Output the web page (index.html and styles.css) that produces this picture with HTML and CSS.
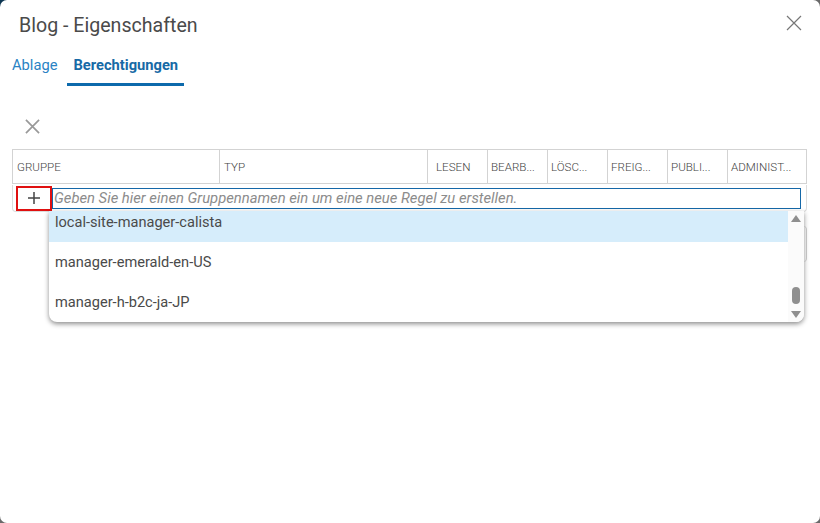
FILE: index.html
```html
<!DOCTYPE html>
<html lang="de">
<head>
    <meta charset="UTF-8">
    <title>Blog - Eigenschaften</title>
    <link rel="stylesheet" href="styles.css">
</head>
<body>
    <div class="dialog">
        <!-- Title bar -->
        <div class="dialog-head">
            <h1 class="dialog-title">Blog - Eigenschaften</h1>
            <button class="close-btn" title="Schließen">
                <svg width="16" height="16" viewBox="0 0 16 16"><path d="M1 1 L15 15 M15 1 L1 15" stroke="#777" stroke-width="1.2" fill="none"/></svg>
            </button>
        </div>

        <!-- Tabs -->
        <div class="tabs">
            <a class="tab">Ablage</a>
            <a class="tab active">Berechtigungen</a>
        </div>

        <!-- Toolbar -->
        <div class="toolbar">
            <button class="tool-btn" title="Entfernen">
                <svg width="16" height="16" viewBox="0 0 16 16"><path d="M1 1 L15 15 M15 1 L1 15" stroke="#999" stroke-width="1.8" fill="none"/></svg>
            </button>
        </div>

        <!-- Permissions table -->
        <div class="grid">
            <div class="grid-head">
                <div class="col col-group">GRUPPE</div>
                <div class="col col-type">TYP</div>
                <div class="col col-perm col-read">LESEN</div>
                <div class="col col-perm">BEARB...</div>
                <div class="col col-perm">LÖSC...</div>
                <div class="col col-perm">FREIG...</div>
                <div class="col col-perm">PUBLI...</div>
                <div class="col col-admin">ADMINIST...</div>
            </div>
            <div class="add-row">
                <button class="add-btn">
                    <svg width="14" height="14" viewBox="0 0 14 14"><path d="M7 1 V13 M1 7 H13" stroke="#444" stroke-width="1.5" fill="none"/></svg>
                </button>
                <input class="group-input" type="text" placeholder="Geben Sie hier einen Gruppennamen ein um eine neue Regel zu erstellen.">
            </div>
            <div class="grid-body"></div>

            <!-- Autocomplete list -->
            <div class="suggest">
                <ul class="suggest-list">
                    <li class="selected">local-site-manager-calista</li>
                    <li>manager-emerald-en-US</li>
                    <li>manager-h-b2c-ja-JP</li>
                </ul>
                <div class="scrollbar">
                    <span class="arrow up"></span>
                    <span class="thumb"></span>
                    <span class="arrow down"></span>
                </div>
            </div>
        </div>
    </div>
</body>
</html>
```

FILE: styles.css
```css
body {
    margin: 0;
    padding: 0;
    width: 820px;
    height: 523px;
    overflow: hidden;
    font-family: Roboto, "Liberation Sans", sans-serif;
    background: linear-gradient(135deg, #0b3552 0%, #6a6a6a 8%, #6a6a6a 100%);
}

.dialog {
    width: 820px;
    height: 523px;
    background: #fff;
    border-radius: 7px;
    box-sizing: border-box;
    position: relative;
}

.dialog-head {
    display: flex;
    justify-content: space-between;
    align-items: flex-start;
    height: 52px;
}

.dialog-title {
    margin: 0;
    padding: 14px 0 0 19px;
    font-size: 19.6px;
    font-weight: 400;
    line-height: 24px;
    color: #4a4a4a;
}

.close-btn {
    border: none;
    background: none;
    padding: 0;
    margin: 15px 18px 0 0;
    width: 16px;
    height: 16px;
    cursor: pointer;
}

.tabs {
    display: flex;
    height: 35px;
}

.tab {
    font-size: 14.7px;
    line-height: 26px;
    color: #2a83c4;
    padding: 0 10px 0 12px;
    cursor: pointer;
}

.tab.active {
    font-weight: 700;
    color: #176aa6;
    padding: 0 6px;
    border-bottom: 3px solid #0d6aac;
    height: 31px;
}

.toolbar {
    height: 62px;
    padding: 0 0 0 25px;
    box-sizing: border-box;
}

.tool-btn {
    border: none;
    background: none;
    padding: 0;
    margin-top: 32px;
    width: 15px;
    height: 15px;
}

.tool-btn svg {
    width: 15px;
    height: 15px;
}

.grid {
    margin: 0 13px 0 12px;
    position: relative;
}

.grid-head {
    display: flex;
    height: 35px;
    border: 1px solid #d3d3d3;
    border-left: none;
    box-sizing: border-box;
}

.col {
    font-size: 11.6px;
    font-weight: 300;
    color: #444;
    line-height: 34px;
    padding-left: 4px;
    border-left: 1px solid #d3d3d3;
    white-space: nowrap;
    overflow: hidden;
    box-sizing: border-box;
}

.col-group { width: 207px; }
.col-type { width: 208px; }
.col-perm { width: 60px; padding-left: 3px; }
.col-read { padding-left: 8px; }
.col-admin { flex: 1; padding-left: 3px; }

.add-row {
    display: flex;
    align-items: center;
    height: 27px;
    border: 1px solid #dcdcdc;
    border-top: none;
    border-radius: 0 0 4px 4px;
    box-sizing: border-box;
    padding: 0 5px 0 3px;
    margin-top: 1px;
}

.add-btn {
    width: 36px;
    height: 25px;
    border: 2px solid #e01010;
    background: #fff;
    padding: 0;
    display: flex;
    align-items: center;
    justify-content: center;
    box-sizing: border-box;
}

.group-input {
    flex: 1;
    height: 21px;
    border: 1px solid #1568a8;
    box-sizing: border-box;
    font-family: Roboto, "Liberation Sans", sans-serif;
    font-size: 14.8px;
    padding: 0 1px;
    outline: none;
}

.group-input::placeholder {
    font-style: italic;
    color: #8c8c8c;
}

.grid-body {
    height: 36px;
    margin-top: 14px;
    border-right: 1px solid #cfcfcf;
    border-radius: 0 4px 4px 0;
}

.suggest {
    position: absolute;
    left: 37px;
    top: 62px;
    width: 755px;
    height: 111px;
    background: #fff;
    border-radius: 0 0 8px 8px;
    box-shadow: 0 2px 5px rgba(0, 0, 0, 0.45);
    display: flex;
    overflow: hidden;
}

.suggest-list {
    list-style: none;
    margin: -9px 0 0 0;
    padding: 0;
    flex: 1;
}

.suggest-list li {
    height: 40px;
    line-height: 40px;
    font-size: 14.6px;
    color: #4a4a4a;
    padding-left: 6px;
}

.suggest-list li.selected {
    background: #d6edfb;
}

.scrollbar {
    width: 16px;
    background: #fbfbfb;
    position: relative;
}

.arrow {
    position: absolute;
    left: 3px;
    width: 0;
    height: 0;
    border-left: 5px solid transparent;
    border-right: 5px solid transparent;
}

.arrow.up {
    top: 4px;
    border-bottom: 7px solid #8f8f8f;
}

.arrow.down {
    bottom: 4px;
    border-top: 7px solid #8f8f8f;
}

.thumb {
    position: absolute;
    left: 4px;
    top: 76px;
    width: 8px;
    height: 17px;
    border-radius: 4px;
    background: #8f8f8f;
}
```
